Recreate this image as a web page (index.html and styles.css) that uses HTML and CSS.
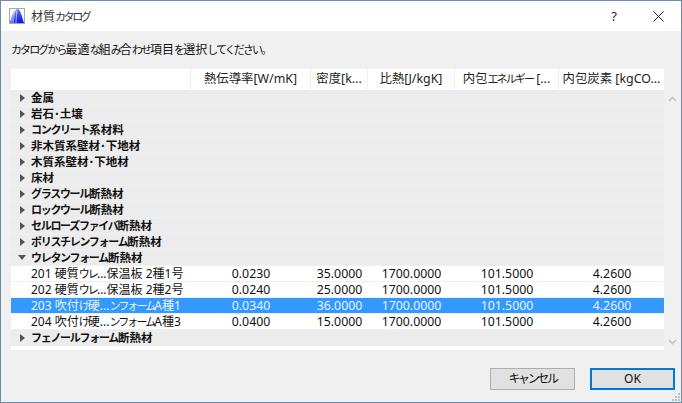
FILE: index.html
```html
<!DOCTYPE html>
<html lang="ja">
<head>
<meta charset="utf-8">
<title>材質カタログ</title>
<link rel="stylesheet" href="styles.css">
</head>
<body>
<div class="window">
  <header class="titlebar">
    <svg class="app-icon" width="16" height="16" viewBox="0 0 16 16">
      <defs>
        <linearGradient id="iconLeft" x1="0" y1="0" x2="0" y2="1"><stop offset="0" stop-color="#c4d0fa"/><stop offset="1" stop-color="#5f78f5"/></linearGradient>
        <linearGradient id="iconRight" x1="0" y1="0" x2="0" y2="1"><stop offset="0" stop-color="#5a6cf5"/><stop offset="1" stop-color="#1212f0"/></linearGradient>
      </defs>
      <rect x="0.5" y="0.5" width="15" height="15" fill="#fff" stroke="#a8a8a8"/>
      <path d="M1 15C3 8 5 2 9 1c3 2 4 8 6 14z" fill="url(#iconRight)"/>
      <path d="M1 15C2 9 4 4 7 2 6 6 5 10 5 15z" fill="url(#iconLeft)"/>
      <path d="M7 3c0 4-.5 8-.5 12h1C7.500 10 8 6 9 2z" fill="#a9b8fb"/>
    </svg>
    <span class="title">材質<span class="k">カタログ</span></span>
    <span class="help">?</span>
    <svg class="close" width="11" height="11" viewBox="0 0 11 11"><path d="M.5.5l10 10M10.5.5l-10 10" stroke="#222" fill="none"/></svg>
  </header>
  <main class="body">
    <p class="prompt"><span class="k">カタログから</span>最適<span class="k">な</span>組<span class="k">み</span>合<span class="k">わせ</span>項目<span class="k">を</span>選択<span class="k">してください。</span></p>
    <div class="list">
      <div class="table">
        <div class="row head">
          <div class="cell"></div>
          <div class="cell">熱伝導率[W/mK]</div>
          <div class="cell">密度[k...</div>
          <div class="cell">比熱[J/kgK]</div>
          <div class="cell">内包<span class="k">エネルギー</span> [...</div>
          <div class="cell">内包炭素 [kgCO...</div>
        </div>
        <div class="row group"><i class="tri"></i>金属</div>
        <div class="row group"><i class="tri"></i>岩石･土壌</div>
        <div class="row group"><i class="tri"></i><span class="k">コンクリート</span>系材料</div>
        <div class="row group"><i class="tri"></i>非木質系壁材･下地材</div>
        <div class="row group"><i class="tri"></i>木質系壁材･下地材</div>
        <div class="row group"><i class="tri"></i>床材</div>
        <div class="row group"><i class="tri"></i><span class="k">グラスウール</span>断熱材</div>
        <div class="row group"><i class="tri"></i><span class="k">ロックウール</span>断熱材</div>
        <div class="row group"><i class="tri"></i><span class="k">セルローズファイバ</span>断熱材</div>
        <div class="row group"><i class="tri"></i><span class="k">ポリスチレンフォーム</span>断熱材</div>
        <div class="row group"><i class="tri open"></i><span class="k">ウレタンフォーム</span>断熱材</div>
        <div class="row item"><div class="cell name">201 硬質<span class="k">ウレ</span>...保温板 2種1号</div><div class="cell">0.0230</div><div class="cell">35.0000</div><div class="cell">1700.0000</div><div class="cell">101.5000</div><div class="cell">4.2600</div></div>
        <div class="row item"><div class="cell name">202 硬質<span class="k">ウレ</span>...保温板 2種2号</div><div class="cell">0.0240</div><div class="cell">25.0000</div><div class="cell">1700.0000</div><div class="cell">101.5000</div><div class="cell">4.2600</div></div>
        <div class="row item selected"><div class="cell name">203 吹付<span class="k">け</span>硬...<span class="k">ンフォーム</span>A種1</div><div class="cell">0.0340</div><div class="cell">36.0000</div><div class="cell">1700.0000</div><div class="cell">101.5000</div><div class="cell">4.2600</div></div>
        <div class="row item"><div class="cell name">204 吹付<span class="k">け</span>硬...<span class="k">ンフォーム</span>A種3</div><div class="cell">0.0400</div><div class="cell">15.0000</div><div class="cell">1700.0000</div><div class="cell">101.5000</div><div class="cell">4.2600</div></div>
        <div class="row group"><i class="tri"></i><span class="k">フェノールフォーム</span>断熱材</div>
        <div class="tail"></div>
      </div>
      <div class="scrollbar">
        <svg width="9" height="6" viewBox="0 0 9 6"><path d="M1 5l3.500-3.500L8 5" fill="none" stroke="#c4c4c4" stroke-width="1.600"/></svg>
        <svg width="9" height="6" viewBox="0 0 9 6"><path d="M1 1l3.500 3.500L8 1" fill="none" stroke="#c4c4c4" stroke-width="1.600"/></svg>
      </div>
    </div>
    <footer class="actions">
      <button class="btn"><span class="k">キャンセル</span></button>
      <button class="btn default">OK</button>
    </footer>
    <svg class="grip" width="8" height="8" viewBox="0 0 8 8"><path d="M6 0h2v2H6zM3 3h2v2H3zM6 3h2v2H6zM0 6h2v2H0zM3 6h2v2H3zM6 6h2v2H6z" fill="#bdbdbd"/></svg>
  </main>
</div>
</body>
</html>
```
FILE: styles.css
```css
* { box-sizing: border-box; }
html, body { margin: 0; padding: 0; }
body {
  width: 682px;
  height: 403px;
  overflow: hidden;
  font-family: "Noto Sans", "Noto Sans CJK JP", sans-serif;
  font-size: 12px;
  color: #000;
}
.k { font-size: 11px; letter-spacing: -1.9px; }
.window {
  width: 682px;
  height: 403px;
  border: 1px solid #6d8cab;
  display: flex;
  flex-direction: column;
  background: #f0f0f0;
}
.titlebar {
  height: 30px;
  flex: none;
  background: #fff;
  display: flex;
  align-items: center;
  padding-left: 8px;
}
.app-icon { flex: none; }
.title { margin-left: 6px; color: #333; font-size: 12px; }
.title .k { letter-spacing: -2.4px; }
.help { margin-left: auto; font-size: 13px; color: #222; margin-right: 36px; }
.close { margin-right: 17px; }
.body { flex: 1; position: relative; display: flex; flex-direction: column; padding: 0 0 0 10px; }
.prompt { margin: 10px 0 11px; height: 17px; line-height: 17px; font-size: 12px; color: #111; white-space: nowrap; }
.prompt .k { letter-spacing: -1.900px; }
.list { display: flex; align-items: stretch; height: 281px; }
.table { width: 653px; flex: none; }
.row {
  display: grid;
  grid-template-columns: 179px 120px 57px 87px 104px 106px;
  height: 16px;
  line-height: 15px;
}
.head { height: 21px; line-height: 20px; background: #fff; }
.head .cell { border-left: 1px solid #f0f0f0; text-align: center; color: #222; overflow: hidden; white-space: nowrap; font-size: 12.400px; }
.head .cell:first-child { border-left: 0; }
.group {
  display: flex;
  align-items: center;
  background: #ececec;
  border-bottom: 1px solid #f0f0f0;
  font-family: "Noto Sans CJK JP", sans-serif;
  font-weight: 700;
  font-size: 11.500px;
  padding-left: 9px;
  color: #111;
}
.group .k { letter-spacing: -1.300px; }
.tri {
  width: 0;
  height: 0;
  margin-right: 6px;
  border-left: 5px solid #555;
  border-top: 4px solid transparent;
  border-bottom: 4px solid transparent;
}
.tri.open {
  border-top: 5px solid #555;
  border-left: 4px solid transparent;
  border-right: 4px solid transparent;
  border-bottom: 0;
  margin-left: -2px;
  margin-right: 5px;
}
.item { background: #fff; border-bottom: 1px solid #f0f0f0; }
.item .cell { text-align: center; white-space: nowrap; color: #111; font-size: 12.300px; padding-left: 2px; }
.item .cell.name { text-align: left; padding-left: 20px; overflow: hidden; font-size: 12px; }
.selected { background: #3399ff; }
.selected .cell { color: #e8f3ff; }
.tail { height: 4px; background: #fff; }
.scrollbar {
  width: 17px;
  display: flex;
  flex-direction: column;
  align-items: center;
  justify-content: space-between;
  padding: 27px 0 5px;
}
.actions { display: flex; justify-content: flex-end; gap: 15px; padding: 18px 6px 0 0; }
.btn {
  width: 85px;
  height: 22px;
  padding: 0;
  border: 1px solid #adadad;
  background: #e1e1e1;
  font: inherit;
  color: #111;
  line-height: 18px;
}
.btn .k { font-size: 12px; letter-spacing: -2.400px; }
.btn.default { border: 2px solid #0078d7; }
.grip { position: absolute; right: 1px; bottom: 1px; }
```
